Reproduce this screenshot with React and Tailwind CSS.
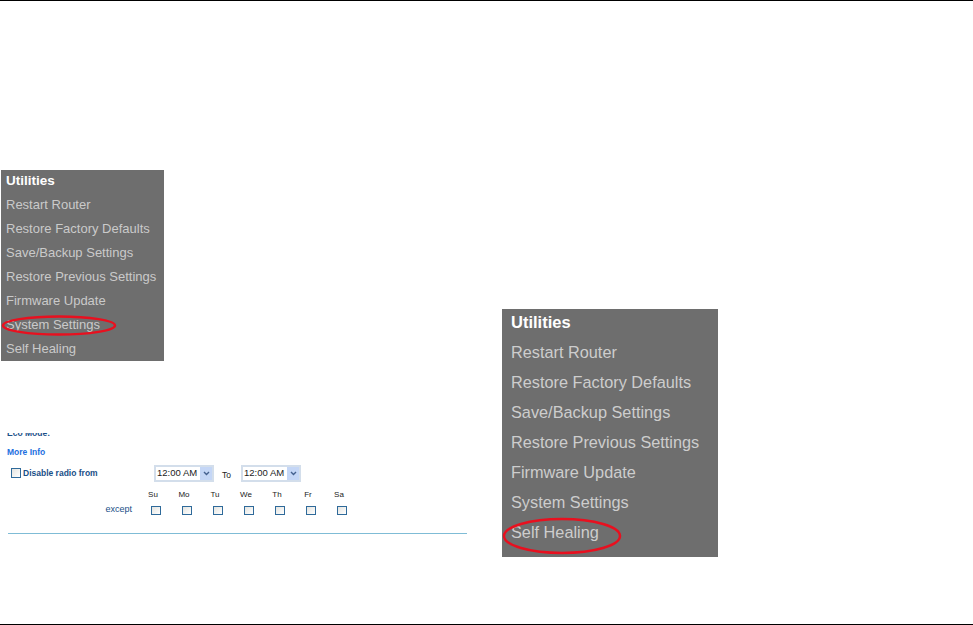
const items = ['Restart Router', 'Restore Factory Defaults', 'Save/Backup Settings', 'Restore Previous Settings', 'Firmware Update', 'System Settings', 'Self Healing'];
const days = ['Su', 'Mo', 'Tu', 'We', 'Th', 'Fr', 'Sa'];

function UtilMenu({ big }) {
  return (
    <div className={big ? 'relative w-[216px] h-[248px] bg-[#6e6e6e] pl-[9px]' : 'relative w-[163px] h-[191px] bg-[#6e6e6e] pl-[5px]'}>
      <div className={big ? 'h-[30px] leading-[27px] text-[16.5px] font-bold text-white' : 'h-[24px] leading-[22px] text-[13.5px] font-bold text-white'}>Utilities</div>
      {items.map((t) => (
        <div key={t} className={big ? 'h-[30px] leading-[27px] text-[16.3px] text-[#cdcdcd] whitespace-nowrap' : 'h-[24px] leading-[22px] text-[13px] text-[#cacaca] whitespace-nowrap'}>{t}</div>
      ))}
      {big ? (
        <svg className="absolute left-0 top-[208px]" width="124" height="38" viewBox="0 0 124 38" fill="none">
          <ellipse cx="60" cy="19" rx="58" ry="17" stroke="#e8101f" strokeWidth="2.5" />
        </svg>
      ) : (
        <svg className="absolute left-0 top-[144px]" width="118" height="24" viewBox="0 0 118 24" fill="none">
          <ellipse cx="58" cy="11.5" rx="56" ry="9" stroke="#e8101f" strokeWidth="2.5" />
        </svg>
      )}
    </div>
  );
}

function Check({ className }) {
  return <span className={'block w-[10px] h-[9px] border border-[#2f6a9a] bg-gradient-to-br from-[#e4e4e0] to-white ' + (className || '')} />;
}

function TimeSelect() {
  return (
    <div className="flex items-center w-[60px] h-[17px] border-2 border-[#d3deeb] bg-white text-[#222] text-[9.5px] pl-px">
      <span className="flex-1 whitespace-nowrap">12:00 AM</span>
      <span className="flex items-center justify-center w-[12px] h-[13px] bg-[#c4d6f6]">
        <svg width="7" height="5" viewBox="0 0 7 5" fill="none"><path d="M1 1l2.5 2.5L6 1" stroke="#44618f" strokeWidth="1.4" /></svg>
      </span>
    </div>
  );
}

export default function App() {
  return (
    <div className="w-[973px] h-[625px] flex flex-col bg-white border-b border-black font-['Liberation_Sans',Arial,sans-serif]">
      <div className="h-px bg-black shrink-0" />
      <div className="flex flex-1 min-h-0">
        <div className="w-[502px] shrink-0 pt-[169px] pl-px">
          <UtilMenu />
          <div className="mt-[72px] pl-[6px] w-[466px]">
            <div className="h-[5px] overflow-hidden flex items-end text-[8.5px] leading-[9px] font-bold text-[#1a4f88]">
              <span>Eco Mode:</span>
            </div>
            <div className="mt-[9px] h-[10px] leading-[10px] text-[8.5px] font-bold text-[#1d6fe0]">More Info</div>
            <div className="mt-[6px] flex items-center h-[20px]">
              <Check className="ml-[4px] h-[10px]" />
              <span className="ml-[2px] w-[131px] text-[8.5px] font-bold text-[#1a4f88]">Disable radio from</span>
              <TimeSelect />
              <span className="ml-[8px] mt-[4px] w-[9px] text-[8.5px] text-[#222]">To</span>
              <div className="ml-[10px]"><TimeSelect /></div>
            </div>
            <div className="mt-[7px] flex">
              <div className="w-[125px] pt-[13px] text-right text-[9px] text-[#1a4f88]">except</div>
              <div className="flex ml-[8px]">
                {days.map((d) => (
                  <div key={d} className="w-[31px] flex flex-col items-center">
                    <span className="mr-[5px] h-[10px] leading-[10px] text-[8px] text-[#222]">{d}</span>
                    <Check className="mt-[6px]" />
                  </div>
                ))}
              </div>
            </div>
            <div className="mt-[16px] ml-px h-px bg-[#7fbcd6]" />
          </div>
        </div>
        <div className="pt-[308px]">
          <UtilMenu big />
        </div>
      </div>
    </div>
  );
}
